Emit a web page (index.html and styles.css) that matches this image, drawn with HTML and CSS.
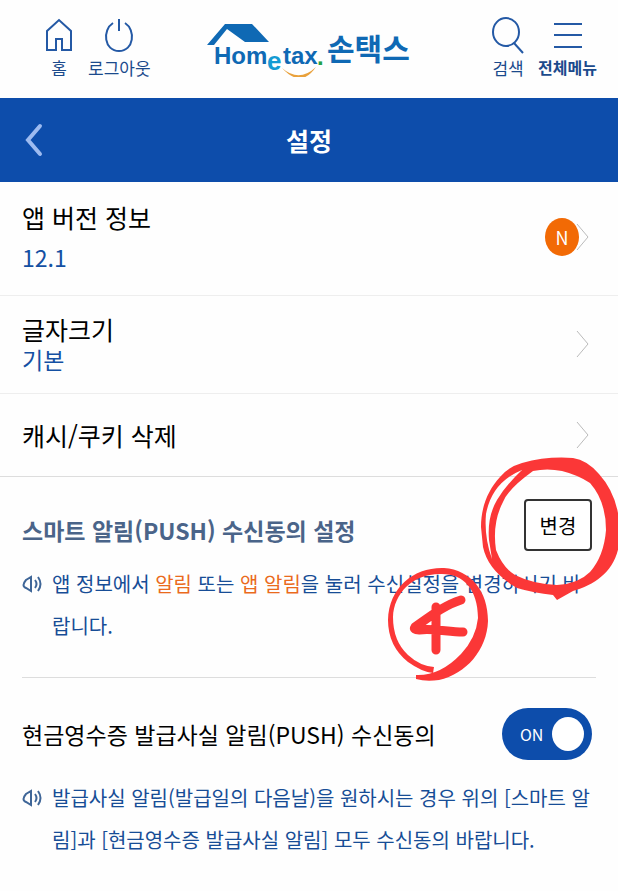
FILE: index.html
```html
<!DOCTYPE html>
<html lang="ko">
<head>
    <meta charset="UTF-8">
    <meta name="viewport" content="width=device-width, initial-scale=1.0">
    <title>손택스 설정</title>
    <link rel="stylesheet" href="styles.css">
</head>
<body>
    <header class="top">
        <nav class="top-nav">
            <a class="top-link" href="#">
                <svg class="top-icon" width="30" height="38" viewBox="0 0 30 38"><path d="M3 33V14L15 3l12 11v19h-9V22h-6v11z"/></svg>
                <span>홈</span>
            </a>
            <a class="top-link" href="#">
                <svg class="top-icon" width="30" height="38" viewBox="0 0 30 38"><path d="M9 6C-2 13 0 34 15 34S32 13 21 6M15 2v12"/></svg>
                <span>로그아웃</span>
            </a>
        </nav>
        <a class="logo" href="#" aria-label="Hometax 손택스">
            <svg width="208" height="60" viewBox="0 0 208 60">
                <path d="M2 28L20 7h27l17 18H40L22 12 9 28z" fill="#0f69b4"/>
                <g class="logo-en">
                    <text x="9" y="47">Hom</text>
                    <text class="logo-e" x="62" y="53">e</text>
                    <text x="78" y="47">tax</text>
                    <text class="logo-dot" x="112" y="48">.</text>
                </g>
                <path d="M77 51q17 15 34-1-15 22-34 1z" fill="#e9a13b"/>
                <text class="logo-ko" x="122" y="43">손택스</text>
            </svg>
        </a>
        <nav class="top-nav top-nav-right">
            <a class="top-link" href="#">
                <svg class="top-icon" width="36" height="38" viewBox="0 0 36 38"><ellipse cx="16" cy="15" rx="13" ry="14"/><path d="M24 26l9 10"/></svg>
                <span>검색</span>
            </a>
            <a class="top-link top-link-bold" href="#">
                <svg class="top-icon" width="32" height="38" viewBox="0 0 32 38"><path d="M2 7h28M2 18h28M2 30h28"/></svg>
                <span>전체메뉴</span>
            </a>
        </nav>
    </header>

    <div class="title-bar">
        <button class="back" type="button" aria-label="뒤로">
            <svg width="18" height="34" viewBox="0 0 18 34"><path d="M15 3L3 17l12 14"/></svg>
        </button>
        <h1>설정</h1>
    </div>

    <main>
        <!-- Menu rows -->
        <a class="row row-version" href="#">
            <span class="row-text">앱 버전 정보<span class="row-value">12.1</span></span>
            <span class="badge">N</span>
            <svg class="chevron" width="14" height="28" viewBox="0 0 14 28"><path d="M1 1l11 13L1 27"/></svg>
        </a>
        <a class="row row-size" href="#">
            <span class="row-text">글자크기<span class="row-value">기본</span></span>
            <svg class="chevron" width="14" height="28" viewBox="0 0 14 28"><path d="M1 1l11 13L1 27"/></svg>
        </a>
        <a class="row row-cache" href="#">
            <span class="row-text">캐시/쿠키 삭제</span>
            <svg class="chevron" width="14" height="28" viewBox="0 0 14 28"><path d="M1 1l11 13L1 27"/></svg>
        </a>

        <!-- Smart push -->
        <section class="setting">
            <div class="setting-head">
                <h2 class="setting-title setting-title-smart">스마트 알림(PUSH) 수신동의 설정</h2>
                <button class="change-btn" type="button">변경</button>
            </div>
            <div class="note">
                <svg class="speaker" width="22" height="20" viewBox="0 0 22 20"><path d="M9 3v14L4 14Q-1 12 4 6zM13 6q3 4 0 8M16 3q5 7 0 14"/></svg>
                <p>앱 정보에서 <em>알림</em> 또는 <em>앱 알림</em>을 눌러 수신설정을 변경하시기 바랍니다.</p>
            </div>
            <!-- Hand-drawn marks -->
            <svg class="marks" width="238" height="240" viewBox="380 450 238 240" aria-hidden="true">
                <path class="marks-fill" fill-rule="evenodd" d="M481 527C481 507 488 490 500 477Q508 467 522 463Q547 456 573 458Q587 460 599 474Q620 497 620 535C619 568 598 584 573 591L557 600L553 595Q534 593 517 588Q488 571 483 547ZM533 471Q508 489 503 502Q492 523 496 550Q503 568 515 575Q533 584 557 585Q578 584 590 572Q604 556 606 530Q606 501 590 483Q578 475 562 471Q547 468 533 471ZM522 470Q506 485 497 500Q487 517 489 540L492 559Q484 537 486 514Q492 482 522 470Z"/>
                <path class="marks-fill" d="M433 673Q422 672 408 662Q388 646 388 620C389 587 414 567 444 568C471 570 488 591 488 621C487 650 466 674 439 680Q426 682 416 679V675Q440 676 461 654Q476 638 478 618C478 589 463 574 442 574C413 573 394 593 393 617Q393 641 408 655Q420 666 434 667Z"/>
                <path class="marks-line" d="M461 600C445 605 432 615 415 627Q413 630 419 630C433 628 448 632 463 632M436 607V650"/>
            </svg>
        </section>

        <!-- Cash receipt push -->
        <section class="setting setting-cash">
            <div class="setting-head">
                <h2 class="setting-title"><label for="cashPush">현금영수증 발급사실 알림(PUSH) 수신동의</label></h2>
                <label class="toggle">
                    <input type="checkbox" id="cashPush" checked>
                    <span class="toggle-text">ON</span>
                    <span class="toggle-knob"></span>
                </label>
            </div>
            <div class="note">
                <svg class="speaker" width="22" height="20" viewBox="0 0 22 20"><path d="M9 3v14L4 14Q-1 12 4 6zM13 6q3 4 0 8M16 3q5 7 0 14"/></svg>
                <p>발급사실 알림(발급일의 다음날)을 원하시는 경우 위의 [스마트 알림]과 [현금영수증 발급사실 알림] 모두 수신동의 바랍니다.</p>
            </div>
        </section>
    </main>
</body>
</html>
```
FILE: styles.css
```css
* {
    margin: 0;
    padding: 0;
    box-sizing: border-box;
}

body {
    font-family: 'Noto Sans CJK KR', sans-serif;
    background: #fefefe;
    color: #000;
    overflow-x: hidden;
}

a {
    color: inherit;
    text-decoration: none;
}

button {
    font-family: inherit;
    cursor: pointer;
}

svg {
    display: block;
    flex-shrink: 0;
}

/* Top header */
.top {
    display: grid;
    grid-template-columns: 1fr auto 1fr;
    align-items: start;
    height: 98px;
    padding: 17px 21px 0;
}

.top-nav {
    display: flex;
    gap: 12px;
    padding-left: 21px;
}

.top-nav-right {
    justify-content: flex-end;
    padding-left: 0;
}

.top-link {
    display: flex;
    flex-direction: column;
    align-items: center;
    min-width: 34px;
    font-size: 17px;
    line-height: 25px;
    color: #1b4a8c;
}

.top-link-bold {
    font-size: 16px;
    font-weight: 700;
}

.top-icon {
    fill: none;
    stroke: #2459a5;
    stroke-width: 2;
}

.logo-en {
    font-family: 'Liberation Sans', sans-serif;
    font-size: 24px;
    font-weight: 700;
    fill: #0f69b4;
}

.logo-e {
    font-size: 26px;
    fill: #159bd3;
}

.logo-dot {
    fill: #24a148;
}

.logo-ko {
    font-size: 30px;
    font-weight: 700;
    fill: #0f69b4;
}

/* Page title */
.title-bar {
    display: grid;
    grid-template-columns: 44px 1fr 44px;
    align-items: center;
    height: 84px;
    padding: 0 12px;
    background: #0d4dab;
    color: #fff;
}

.title-bar h1 {
    font-size: 25px;
    line-height: 36px;
    font-weight: 700;
    text-align: center;
}

.back {
    display: flex;
    justify-content: center;
    border: none;
    background: none;
}

.back path {
    fill: none;
    stroke: #9dbbf0;
    stroke-width: 4;
    stroke-linecap: round;
}

/* Menu rows */
.row {
    display: flex;
    align-items: center;
    padding: 0 28px 0 22px;
    border-bottom: 1px solid #eee;
    font-size: 25px;
}

.row-text {
    flex: 1;
}

.row-value {
    display: block;
    font-size: 23px;
    color: #1450a3;
}

.row-version {
    padding-top: 15px;
    padding-bottom: 18px;
    line-height: 40px;
}

.row-size {
    padding-top: 18px;
    padding-bottom: 19px;
    line-height: 30px;
}

.row-cache {
    padding-top: 21px;
    padding-bottom: 21px;
    border-color: #ddd;
    line-height: 40px;
}

.badge {
    width: 34px;
    height: 38px;
    margin-right: -3px;
    border-radius: 50%;
    background: #f26a05;
    color: #fff;
    font-size: 18px;
    line-height: 38px;
    text-align: center;
}

.chevron {
    fill: none;
    stroke: #bbb;
}

/* Settings */
.setting {
    position: relative;
    padding-top: 22px;
}

.setting-head {
    display: flex;
    align-items: center;
    justify-content: space-between;
    padding: 0 26px 0 22px;
}

.setting-title {
    font-size: 23px;
    line-height: 36px;
    font-weight: 400;
}

.setting-title-smart {
    padding-top: 10px;
    font-weight: 700;
    color: #4a6489;
}

.change-btn {
    width: 68px;
    height: 52px;
    border: 2px solid #333;
    border-radius: 4px;
    background: #fff;
    font-size: 20px;
}

.note {
    display: flex;
    gap: 8px;
    padding: 12px 22px 0;
    color: #174d96;
}

.note p {
    font-size: 20px;
    line-height: 42px;
    word-break: break-all;
}

.note em {
    font-style: normal;
    color: #ea6a1c;
}

.speaker {
    margin-top: 11px;
    fill: none;
    stroke: #3f6698;
    stroke-width: 2;
}

.setting-cash {
    margin: 30px 0 0;
    padding-top: 31px;
}

.setting-cash::before {
    content: '';
    position: absolute;
    top: 0;
    left: 22px;
    right: 22px;
    border-top: 1px solid #ddd;
}

.setting-cash .note {
    padding-top: 17px;
}

.toggle {
    display: flex;
    align-items: center;
    justify-content: space-between;
    width: 90px;
    height: 52px;
    padding: 0 8px 0 18px;
    border-radius: 26px;
    background: #0d4dab;
    color: #fff;
    font-size: 16px;
    cursor: pointer;
}

.toggle input {
    position: absolute;
    opacity: 0;
}

.toggle-knob {
    width: 32px;
    height: 34px;
    border-radius: 50%;
    background: #fff;
}

.marks {
    position: absolute;
    top: -27px;
    right: 0;
    z-index: 1;
    pointer-events: none;
}

.marks-fill {
    fill: #fb3737;
}

.marks-line {
    fill: none;
    stroke: #fb3737;
    stroke-width: 9;
    stroke-linecap: round;
    stroke-linejoin: round;
}
```
